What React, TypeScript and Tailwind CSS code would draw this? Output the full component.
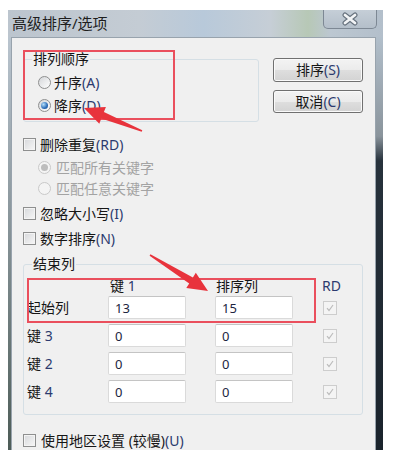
const font = "font-['Noto_Sans','Noto_Sans_CJK_SC',sans-serif]";

const arrow = (x1: number, y1: number, x2: number, y2: number, head = 20, headW = 18, bodyW = 7) => {
  const dx = x2 - x1;
  const dy = y2 - y1;
  const len = Math.hypot(dx, dy);
  const ux = dx / len;
  const uy = dy / len;
  const nx = -uy;
  const ny = ux;
  const bx = x2 - ux * head;
  const by = y2 - uy * head;
  const pts = [
    [x1 - nx * 0.8, y1 - ny * 0.8],
    [x1 + nx * 0.8, y1 + ny * 0.8],
    [bx + (nx * bodyW) / 2, by + (ny * bodyW) / 2],
    [bx + (nx * headW) / 2, by + (ny * headW) / 2],
    [x2, y2],
    [bx - (nx * headW) / 2, by - (ny * headW) / 2],
    [bx - (nx * bodyW) / 2, by - (ny * bodyW) / 2],
  ];
  return pts.map((p) => p.map((v) => v.toFixed(1)).join(",")).join(" ");
};

const Radio = ({ checked, disabled }: { checked?: boolean; disabled?: boolean }) => (
  <span
    className={`w-[13px] h-[13px] shrink-0 rounded-full border flex items-center justify-center ${
      disabled
        ? "border-[#c9c9c9] bg-[#f4f4f4]"
        : "border-[#8e8f8f] bg-[linear-gradient(135deg,#d4d6d9,#ffffff)]"
    }`}
  >
    {checked && (
      <span
        className={`w-[7px] h-[7px] rounded-full ${
          disabled ? "bg-[#bdbdbd]" : "bg-[radial-gradient(circle_at_35%_35%,#b6e0fb,#2a6cb8_60%,#174a8a)]"
        }`}
      />
    )}
  </span>
);

const Check = ({ checked, disabled }: { checked?: boolean; disabled?: boolean }) => (
  <span
    className={`shrink-0 flex items-center justify-center border ${
      disabled
        ? "w-[14px] h-[14px] border-[#cdcdcd] bg-[#f4f4f4]"
        : "w-[13px] h-[13px] border-[#8e8f8f] bg-[linear-gradient(135deg,#d6d8db,#f7f7f7)] shadow-[inset_0_0_0_1px_#f4f4f4]"
    }`}
  >
    {checked && (
      <svg width="10" height="10" viewBox="0 0 10 10">
        <path d="M2 5.2 L4 7.5 L8 2" fill="none" stroke={disabled ? "#bcbcbc" : "#333"} strokeWidth="1.2" />
      </svg>
    )}
  </span>
);

const Key = ({ children }: { children: React.ReactNode }) => (
  <span className="text-[#2b3a6e]">{children}</span>
);

const Field = ({ value }: { value: string }) => (
  <input
    readOnly
    value={value}
    className="w-[78px] h-[23px] rounded-[2px] border border-[#dadada] border-t-[#c4c4c4] bg-white px-[6px] text-[13px] text-[#1c2540] outline-none"
  />
);

const rows = [
  { label: "起始列", a: "13", b: "15" },
  { label: "键", n: "3", a: "0", b: "0" },
  { label: "键", n: "2", a: "0", b: "0" },
  { label: "键", n: "4", a: "0", b: "0" },
];

export default function App() {
  return (
    <div className={`relative w-[418px] h-[450px] bg-white overflow-hidden text-[14px] text-[#161616] ${font}`}>
      <div className="ml-2 mt-[10px] w-[375px] h-[440px] flex flex-col">
        {/* title bar */}
        <div className="h-[27px] flex items-start bg-[linear-gradient(to_right,#bcc5ce,#c4ccd4_35%,#b8c9da_52%,#c6ced6_70%,#b7c8b6_80%,#bcc7d1_86%,#b3bfcb)]">
          <span className="pl-1 leading-[27px] text-[15px] text-[#1e1e1e]">高级排序/选项</span>
          <div className="ml-auto mr-[6px] w-[54px] h-[19px] rounded-b-[5px] border border-t-0 border-[#7d8894] bg-[linear-gradient(to_bottom,#c5ced7,#b4bfca)] flex items-center justify-center">
            <svg width="18" height="14" viewBox="0 0 18 14">
              <path d="M4 3 L14 11 M14 3 L4 11" stroke="#66717d" strokeWidth="5" strokeLinecap="round" />
              <path d="M4 3 L14 11 M14 3 L4 11" stroke="#f2f4f6" strokeWidth="2.8" strokeLinecap="round" />
            </svg>
          </div>
        </div>

        <div className="flex-1 flex">
          <div className="w-[3px] bg-[linear-gradient(to_bottom,#bac5cf,#8e9aa0_40%,#4d5c57)]" />

          {/* client area */}
          <div className="flex-1 border border-b-0 border-[#98a3ad] bg-[#f0f0f0] pl-[11px] pr-[12px] pt-[20px] flex flex-col">
            <div className="flex items-start">
              <div className="w-[236px] mt-[1px] rounded-[3px] border border-[#d5dfe5] pb-[4px] flex flex-col">
                <span className="-mt-[10px] ml-[8px] w-fit px-[1px] bg-[#f0f0f0] leading-[18px]">排列顺序</span>
                <div className="mt-[3px] h-[23px] pl-[14px] flex items-center gap-[3px]">
                  <Radio />
                  <span>
                    升序<Key>(A)</Key>
                  </span>
                </div>
                <div className="h-[23px] pl-[14px] flex items-center gap-[3px]">
                  <Radio checked />
                  <span>
                    降序<Key>(D)</Key>
                  </span>
                </div>
              </div>

              <div className="ml-auto w-[90px] flex flex-col gap-[8px]">
                <button className="h-[24px] rounded-[3px] border border-[#707070] bg-[linear-gradient(to_bottom,#f3f3f3,#ebebeb_50%,#dedede_51%,#d3d3d3)] shadow-[inset_0_0_0_1px_#fafafa] leading-none">
                  排序<Key>(S)</Key>
                </button>
                <button className="h-[23px] rounded-[3px] border border-[#707070] bg-[linear-gradient(to_bottom,#f3f3f3,#ebebeb_50%,#dedede_51%,#d3d3d3)] shadow-[inset_0_0_0_1px_#fafafa] leading-none">
                  取消<Key>(C)</Key>
                </button>
              </div>
            </div>

            <div className="mt-[12px] h-[20px] flex items-center gap-[4px]">
              <Check />
              <span>
                删除重复<Key>(RD)</Key>
              </span>
            </div>
            <div className="mt-[3px] h-[20px] pl-[15px] flex items-center gap-[5px] text-[#a3a3a3]">
              <Radio checked disabled />
              <span>匹配所有关键字</span>
            </div>
            <div className="mt-[1px] h-[20px] pl-[15px] flex items-center gap-[5px] text-[#a3a3a3]">
              <Radio disabled />
              <span>匹配任意关键字</span>
            </div>
            <div className="mt-[5px] h-[20px] flex items-center gap-[4px]">
              <Check />
              <span>
                忽略大小写<Key>(I)</Key>
              </span>
            </div>
            <div className="mt-[5px] h-[20px] flex items-center gap-[4px]">
              <Check />
              <span>
                数字排序<Key>(N)</Key>
              </span>
            </div>

            {/* 结束列 group */}
            <div className="mt-[16px] rounded-[3px] border border-[#d5dfe5] pb-[11px] pl-[3px] flex flex-col">
              <span className="-mt-[10px] ml-[5px] w-fit px-[1px] bg-[#f0f0f0] leading-[18px]">结束列</span>
              <div className="mt-[4px] h-[18px] flex items-center leading-none">
                <span className="w-[81px]" />
                <span className="w-[78px] pl-[2px]">
                  键 <Key>1</Key>
                </span>
                <span className="ml-[29px] w-[78px] pl-[1px]">排序列</span>
                <span className="ml-[29px] text-[#2b3a6e]">RD</span>
              </div>
              <div className="mt-[1px] flex flex-col gap-[5px]">
                {rows.map((r, i) => (
                  <div key={i} className="h-[23px] flex items-center">
                    <span className="w-[81px]">
                      {r.label}
                      {r.n && (
                        <>
                          {" "}
                          <Key>{r.n}</Key>
                        </>
                      )}
                    </span>
                    <Field value={r.a} />
                    <span className="ml-[29px]">
                      <Field value={r.b} />
                    </span>
                    <span className="ml-[30px]">
                      <Check checked disabled />
                    </span>
                  </div>
                ))}
              </div>
            </div>

            <div className="mt-[15px] h-[20px] flex items-center gap-[5px]">
              <Check />
              <span>
                使用地区设置 (较慢)<Key>(U)</Key>
              </span>
            </div>
          </div>

          <div className="w-[7px] bg-[linear-gradient(to_bottom,#b2bfcb_0%,#8a949c_24%,#27323c_30%,#1a232c_100%)]" />
        </div>
      </div>

      {/* annotation overlays */}
      <div className="absolute left-[23px] top-[50px] w-[152px] h-[70px] border-2 border-[#ea4f5d]" />
      <div className="absolute left-[27px] top-[278px] w-[289px] h-[45px] border-2 border-[#ea4f5d]" />
      <svg className="absolute left-0 top-0" width="418" height="450">
        <polygon points={arrow(142, 131, 84, 108)} fill="#e8333c" />
        <polygon points={arrow(150, 255, 208, 291)} fill="#e8333c" />
      </svg>
    </div>
  );
}
